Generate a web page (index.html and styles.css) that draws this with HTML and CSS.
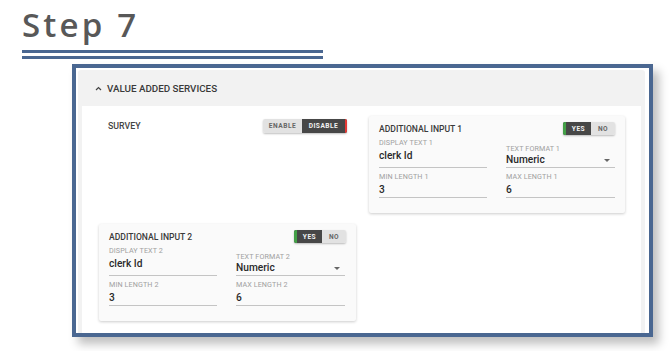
FILE: index.html
```html
<!DOCTYPE html>
<html>
<head>
<meta charset="utf-8">
<link rel="stylesheet" href="styles.css">
</head>
<body>
<div class="page">
  <h1 class="step">Step 7</h1>
  <div class="rule"></div>
  <div class="rule"></div>
  <div class="frame">
    <div class="panel">
      <div class="panel-head">
        <svg class="chev" width="7" height="5" viewBox="0 0 7 5"><path d="M1 4 L3.5 1.5 L6 4" fill="none" stroke="#444" stroke-width="1.2"/></svg>
        <span>VALUE ADDED SERVICES</span>
      </div>
      <div class="panel-body">
        <div class="survey">
          <span class="survey-label">SURVEY</span>
          <div class="toggle">
            <span class="seg off">ENABLE</span>
            <span class="seg on red">DISABLE</span>
          </div>
        </div>
        <div class="card">
          <div class="card-head">
            <span class="card-title">ADDITIONAL INPUT 1</span>
            <div class="toggle small">
              <span class="seg on green">YES</span>
              <span class="seg off no">NO</span>
            </div>
          </div>
          <div class="fields">
            <div class="field"><div class="flabel">DISPLAY TEXT 1</div><div class="fvalue">clerk Id</div></div>
            <div class="field select"><div class="flabel">TEXT FORMAT 1</div><div class="fvalue">Numeric<span class="arrow"></span></div></div>
            <div class="field"><div class="flabel">MIN LENGTH 1</div><div class="fvalue">3</div></div>
            <div class="field"><div class="flabel">MAX LENGTH 1</div><div class="fvalue">6</div></div>
          </div>
        </div>
        <div class="card">
          <div class="card-head">
            <span class="card-title">ADDITIONAL INPUT 2</span>
            <div class="toggle small">
              <span class="seg on green">YES</span>
              <span class="seg off no">NO</span>
            </div>
          </div>
          <div class="fields">
            <div class="field"><div class="flabel">DISPLAY TEXT 2</div><div class="fvalue">clerk Id</div></div>
            <div class="field select"><div class="flabel">TEXT FORMAT 2</div><div class="fvalue">Numeric<span class="arrow"></span></div></div>
            <div class="field"><div class="flabel">MIN LENGTH 2</div><div class="fvalue">3</div></div>
            <div class="field"><div class="flabel">MAX LENGTH 2</div><div class="fvalue">6</div></div>
          </div>
        </div>
      </div>
    </div>
  </div>
</div>
</body>
</html>
```

FILE: styles.css
```css
* { box-sizing: border-box; }
html, body { margin: 0; padding: 0; background: #fff; }
body { font-family: Roboto, "Liberation Sans", sans-serif; }
.page { width: 670px; height: 351px; padding: 0 0 0 22px; overflow: hidden; }
.step {
  margin: 0;
  padding-top: 6px;
  height: 50px;
  font-family: "Open Sans", "DejaVu Sans", sans-serif;
  font-weight: 600;
  font-size: 33px;
  line-height: 38px;
  letter-spacing: 3.2px;
  color: #585858;
}
.rule { width: 301px; height: 3px; background: #4a6791; margin-bottom: 3px; }
.frame {
  margin: 5px 0 0 50px;
  width: 581px;
  height: 273px;
  border: 4px solid #4a6791;
  background: #fff;
  padding: 2px 4px 0 2px;
  box-shadow: 6px 7px 9px rgba(0,0,0,0.25);
}
.panel {
  height: 100%;
  background: #f2f2f2;
  border-radius: 3px 3px 0 0;
  padding: 0 4px;
  display: flex;
  flex-direction: column;
}
.panel-head {
  height: 36px;
  display: flex;
  align-items: center;
  padding-left: 13px;
  font-size: 9.8px;
  font-weight: 500;
  color: #3a3a3a;
}
.chev { margin-right: 5px; }
.panel-body {
  flex: 1;
  background: #fff;
  padding: 10px 16px 12px 17px;
  display: grid;
  grid-template-columns: 257px 256px;
  column-gap: 13px;
  row-gap: 11px;
  align-content: start;
}
.panel-body .survey { grid-column: 1; grid-row: 1; }
.panel-body .card:nth-of-type(2) { grid-column: 2; grid-row: 1; }
.survey {
  display: flex;
  justify-content: space-between;
  align-items: center;
  padding: 0 9px;
  margin-top: 3px;
  align-self: start;
}
.survey-label { font-size: 8.8px; font-weight: 500; color: #444; }
.toggle {
  display: flex;
  height: 14px;
  border-radius: 2px;
  overflow: hidden;
  box-shadow: 0 1px 2px rgba(0,0,0,0.25);
}
.seg {
  display: flex;
  align-items: center;
  justify-content: center;
  font-size: 6.6px;
  font-weight: 700;
  letter-spacing: 0.5px;
}
.seg.off { background: #e2e2e2; color: #666; width: 39px; }
.seg.on { background: #474747; color: #f2f2f2; width: 45px; }
.seg.red { border-right: 2px solid #e53935; }
.toggle.small { height: 13px; }
.toggle.small .seg.on { width: 28px; }
.toggle.small .seg.no { width: 24px; }
.seg.green { border-left: 3px solid #43a047; }
.card {
  background: #fafafa;
  box-shadow: 0 1px 3px rgba(0,0,0,0.2);
  border-radius: 2px;
  padding: 6px 10px 15px 10px;
}
.card-head {
  display: flex;
  justify-content: space-between;
  align-items: center;
  height: 13px;
}
.card-title { font-size: 8.6px; font-weight: 500; color: #3a3a3a; padding-top: 1px; }
.fields {
  display: grid;
  grid-template-columns: 108px 109px;
  column-gap: 19px;
  row-gap: 5px;
  margin-top: 4px;
}
.field { border-bottom: 1px solid #c4c4c4; padding-bottom: 1px; }
.flabel { font-size: 7.2px; color: #a0a0a0; line-height: 8px; margin-bottom: 3px; letter-spacing: 0.1px; }
.fvalue { font-size: 10.2px; font-weight: 500; color: #2a2a2a; line-height: 12px; display: flex; justify-content: space-between; align-items: center; }
.field.select { margin-top: 6px; }
.field.select .flabel { margin-bottom: 1px; }
.arrow {
  width: 0; height: 0;
  border-left: 3px solid transparent;
  border-right: 3px solid transparent;
  border-top: 3px solid #666;
  margin-right: 5px;
}
```
